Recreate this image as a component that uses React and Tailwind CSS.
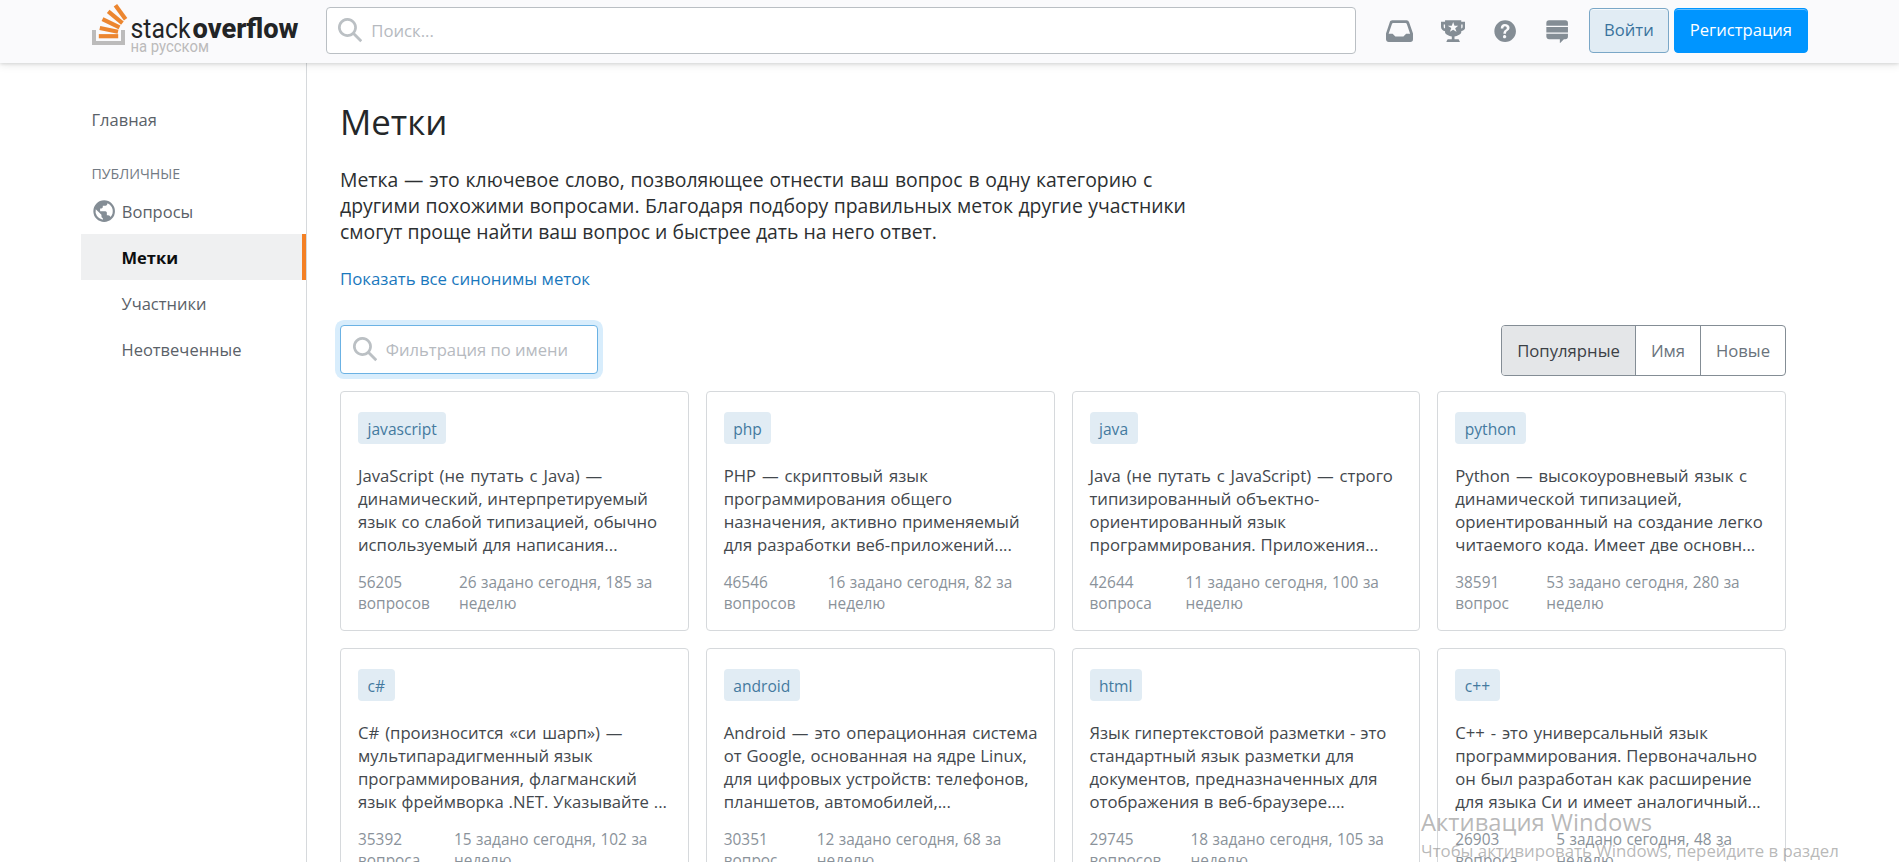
const tags = [
  { name: 'javascript', lines: ['JavaScript (не путать с Java) —', 'динамический, интерпретируемый', 'язык со слабой типизацией, обычно', 'используемый для написания...'], total: '56205', unit: 'вопросов', today: '26 задано сегодня, 185 за', col: 'w-[101px]' },
  { name: 'php', lines: ['PHP — скриптовый язык', 'программирования общего', 'назначения, активно применяемый', 'для разработки веб-приложений....'], total: '46546', unit: 'вопросов', today: '16 задано сегодня, 82 за', col: 'w-[104px]' },
  { name: 'java', lines: ['Java (не путать с JavaScript) — строго', 'типизированный объектно-', 'ориентированный язык', 'программирования. Приложения...'], total: '42644', unit: 'вопроса', today: '11 задано сегодня, 100 за', col: 'w-[96px]' },
  { name: 'python', lines: ['Python — высокоуровневый язык с', 'динамической типизацией,', 'ориентированный на создание легко', 'читаемого кода. Имеет две основн...'], total: '38591', unit: 'вопрос', today: '53 задано сегодня, 280 за', col: 'w-[91px]' },
  { name: 'c#', lines: ['C# (произносится «си шарп») —', 'мультипарадигменный язык', 'программирования, флагманский', 'язык фреймворка .NET. Указывайте ...'], total: '35392', unit: 'вопроса', today: '15 задано сегодня, 102 за', col: 'w-[96px]' },
  { name: 'android', lines: ['Android — это операционная система', 'от Google, основанная на ядре Linux,', 'для цифровых устройств: телефонов,', 'планшетов, автомобилей,...'], total: '30351', unit: 'вопрос', today: '12 задано сегодня, 68 за', col: 'w-[93px]' },
  { name: 'html', lines: ['Язык гипертекстовой разметки - это', 'стандартный язык разметки для', 'документов, предназначенных для', 'отображения в веб-браузере....'], total: '29745', unit: 'вопросов', today: '18 задано сегодня, 105 за', col: 'w-[101px]' },
  { name: 'c++', lines: ['C++ - это универсальный язык', 'программирования. Первоначально', 'он был разработан как расширение', 'для языка Си и имеет аналогичный...'], total: '26903', unit: 'вопроса', today: '5 задано сегодня, 48 за', col: 'w-[101px]' },
];

const paths = {
  inbox: 'M15.19 1H4.63c-.85 0-1.6.54-1.85 1.35L0 10.79V15c0 1.1.9 2 2 2h16a2 2 0 002-2v-4.21l-2.87-8.44A2 2 0 0015.19 1zm-.28 10l-2 2h-6l-2-2H1.96L4.4 3.68A1 1 0 015.35 3h9.12c.43 0 .82.28.95.68L17.86 11h-2.95z',
  trophy: 'M15 2V1H3v1H0v4c0 1.6 1.4 3 3 3v1c.4 1.5 3 2.6 5 3v2H5s-1 1.5-1 2h10c0-.4-1-2-1-2h-3v-2c2-.4 4.6-1.5 5-3V9c1.6-.2 3-1.4 3-3V2h-3zM3 7c-.5 0-1-.5-1-1V4h1v3zm8.4 2.5L9 8 6.6 9.4l1-2.7L5 5h3l1-2.7L10 5h2.8l-2.3 1.8 1 2.7h-.1zM16 6c0 .5-.5 1-1 1V4h1v2z',
  help: 'M9 1C4.64 1 1 4.64 1 9c0 4.36 3.64 8 8 8 4.36 0 8-3.64 8-8 0-4.36-3.64-8-8-8zm.81 12.13c-.02.71-.55 1.15-1.24 1.13-.66-.02-1.17-.49-1.15-1.2.02-.72.56-1.18 1.22-1.16.7.03 1.2.51 1.17 1.23zM11.77 8c-.59.66-1.78 1.09-2.05 1.97a4 4 0 00-.09.75c0 .05-.03.16-.18.16H7.88c-.16 0-.18-.1-.18-.15.06-1.35.66-2.2 1.83-2.88.39-.29.7-.75.7-1.24.01-1.24-1.64-1.82-2.35-.72-.21.33-.18.73-.18 1.1H5.75c0-1.97 1.03-3.26 3.03-3.26 1.75 0 3.47.87 3.47 2.83 0 .57-.2 1.05-.48 1.44z',
  sites: 'M15 1H3a2 2 0 00-2 2v2h16V3a2 2 0 00-2-2zM1 13c0 1.1.9 2 2 2h8v3l3-3h1a2 2 0 002-2v-2H1v2zm16-7H1v4h16V6z',
  globe: 'M9 1a8 8 0 100 16A8 8 0 009 1zM8 15.32a6.46 6.46 0 01-4.3-2.74 6.46 6.46 0 01-.93-5.01L7 11.68v.8c0 .88.12 1.52 1 1.52v1.32zm5.72-2c-.2-.66-1-1.32-1.72-1.32h-1v-2c0-.44-.56-1-1-1H6V7h1c.44 0 1-.56 1-1V5h2c.88 0 1.4-.72 1.4-1.6v-.33a6.45 6.45 0 013.83 4.51 6.45 6.45 0 01-1.51 5.73v.01z',
  search: 'M18 16.5l-5.14-5.18h-.35a7 7 0 10-1.19 1.19v.35L16.5 18l1.5-1.5zM12 7A5 5 0 112 7a5 5 0 0110 0z',
};

function Icon({ name, wide = false, className = '' }) {
  return (
    <svg
      viewBox={wide ? '0 0 20 18' : '0 0 18 18'}
      className={`${wide ? 'w-[27px]' : 'w-[24.3px]'} h-[24.3px] shrink-0 fill-current ${className}`}
      aria-hidden="true"
    >
      <path d={paths[name]} />
    </svg>
  );
}

function Logo() {
  return (
    <svg width="210" height="58" viewBox="0 0 210 58" className="block shrink-0" aria-label="Stack Overflow на русском">
      <path d="M2 30v13h29V30" fill="none" stroke="#bcbbbb" strokeWidth="4" />
      <g stroke="#ec8630" strokeWidth="4.2">
        <path d="M6.8 36.2h19.4" />
        <path d="M7.8 28l18.2 3.8" />
        <path d="M10.5 19.2l17 8.2" />
        <path d="M16.2 11.4l14.2 11.8" />
        <path d="M23.4 5.2l10.2 14" />
      </g>
      <text x="38.5" y="37.5" textLength="60" lengthAdjust="spacingAndGlyphs" fontFamily="Roboto" fontWeight="400" fontSize="27" fill="#222426">stack</text>
      <text x="100.5" y="37.5" textLength="106" lengthAdjust="spacingAndGlyphs" fontFamily="Roboto" fontWeight="800" fontSize="27" fill="#222426">overflow</text>
      <text x="38.5" y="52" textLength="78.5" lengthAdjust="spacingAndGlyphs" fontFamily="Roboto" fontWeight="400" fontSize="16" fill="#bcbbbb">на русском</text>
    </svg>
  );
}

function Header() {
  return (
    <header className="relative z-10 flex h-[63px] items-start bg-[#fafafc] pl-[92px] shadow-[0_1px_3px_rgba(12,13,14,0.12),0_3px_8px_rgba(12,13,14,0.08)]">
      <Logo />
      <div className="mt-[7px] ml-6 flex h-[47px] w-[1030px] items-center rounded-[4px] border border-[#babfc4] bg-white pl-[11px] text-[#bbc0c4]">
        <Icon name="search" />
        <span className="mt-px ml-[9px] text-[16.7px] text-[#b6babf]">Поиск...</span>
      </div>
      <div className="mt-[18.5px] ml-[30px] flex text-[#848d95]">
        <Icon name="inbox" wide />
        <Icon name="trophy" className="ml-7" />
        <Icon name="help" className="ml-[28px]" />
        <Icon name="sites" className="ml-[27px]" />
      </div>
      <div className="mt-2 ml-5 flex gap-[5px] text-[16.6px]">
        <button className="h-[45px] w-20 rounded-[4px] border border-[#7aa7c7] bg-[#e1ecf4] text-[#39739d] shadow-[inset_0_1px_0_rgba(255,255,255,0.7)]">Войти</button>
        <button className="h-[45px] w-[134px] rounded-[4px] border border-[#0095ff] bg-[#0095ff] text-white shadow-[inset_0_1px_0_rgba(255,255,255,0.4)]">Регистрация</button>
      </div>
    </header>
  );
}

function Sidebar() {
  return (
    <nav className="flex w-[226px] shrink-0 flex-col border-r border-[#d6d9dc] pt-[34px] text-[16.5px] text-[#5a6168]">
      <a className="flex h-[46px] items-center pl-[10.5px]">Главная</a>
      <div className="mt-[21px] flex h-[20px] items-center pl-[10.5px] text-[14.2px] text-[#727a83]">ПУБЛИЧНЫЕ</div>
      <a className="mt-1 flex h-[46px] items-center pl-[11px]">
        <Icon name="globe" className="text-[#848d95]" />
        <span className="mt-0.5 ml-[5.5px]">Вопросы</span>
      </a>
      <a className="flex h-[46px] items-center border-r-4 border-[#f48024] bg-[#eff0f1] pt-0.5 pl-[40.5px] font-bold text-[#0c0d0e]">Метки</a>
      <a className="flex h-[46px] items-center pt-0.5 pl-[40.5px]">Участники</a>
      <a className="flex h-[46px] items-center pt-0.5 pl-[40.5px]">Неотвеченные</a>
    </nav>
  );
}

function TagCard({ tag }) {
  return (
    <article className="h-[240px] rounded-[4px] border border-[#d6d9dc] px-[17px] pt-5">
      <div className="flex">
        <a className="flex h-8 items-center rounded-[4px] bg-[#e1ecf4] px-[9.5px] pt-[3px] text-[15.6px] text-[#447a9f]">{tag.name}</a>
      </div>
      <p className="mt-5 text-[16.7px] leading-[23px] whitespace-nowrap text-[#43484d]">
        {tag.lines.map((line) => (
          <span
            key={line}
            className={line.includes('—') || line.startsWith('C++') ? 'block [word-spacing:1.5px]' : 'block [word-spacing:0.5px]'}
          >
            {line}
          </span>
        ))}
      </p>
      <div className="mt-4 flex text-[15.4px] leading-[21px] whitespace-nowrap text-[#8a929a] [word-spacing:0.5px]">
        <div className={`${tag.col} shrink-0`}>
          <div>{tag.total}</div>
          <div>{tag.unit}</div>
        </div>
        <div>
          <div>{tag.today}</div>
          <div>неделю</div>
        </div>
      </div>
    </article>
  );
}

export default function App() {
  return (
    <div className="relative h-[862px] overflow-hidden bg-white font-['Open_Sans','Noto_Sans',sans-serif]">
      <Header />
      <div className="flex pl-[81px]">
        <Sidebar />
        <main className="w-[1479px] pt-[34px] pl-[33px]">
          <h1 className="text-[34.8px] leading-[50px] text-[#242729]">Метки</h1>
          <div className="mt-5 text-[19.4px] leading-[26.2px] whitespace-nowrap text-[#2c2f31]">
            <div className="[word-spacing:0.8px]">Метка — это ключевое слово, позволяющее отнести ваш вопрос в одну категорию с</div>
            <div className="[word-spacing:0.4px]">другими похожими вопросами. Благодаря подбору правильных меток другие участники</div>
            <div>смогут проще найти ваш вопрос и быстрее дать на него ответ.</div>
          </div>
          <a className="mt-[21.4px] block text-[16.8px] leading-6 text-[#1a78bd]">Показать все синонимы меток</a>
          <div className="mt-[34px] flex items-start justify-between">
            <div className="flex h-[49px] w-[258px] items-center rounded-[4px] border border-[#6bb2e4] bg-white pl-3 text-[#bbc0c4] shadow-[0_0_0_5px_#d8edfc]">
              <Icon name="search" />
              <span className="mt-0.5 ml-[8.5px] text-[16.6px] text-[#b6babf]">Фильтрация по имени</span>
            </div>
            <div className="flex h-[51px] rounded-[4px] border border-[#848d95] text-[16.7px] text-[#6a737c]">
              <button className="w-[134px] rounded-l-[3px] border-r border-[#848d95] bg-[#e4e6e8] text-[#3b4045]">Популярные</button>
              <button className="w-[65px] border-r border-[#848d95]">Имя</button>
              <button className="w-[84px]">Новые</button>
            </div>
          </div>
          <div className="mt-[15px] grid grid-cols-4 gap-[17px]">
            {tags.map((tag) => (
              <TagCard key={tag.name} tag={tag} />
            ))}
          </div>
        </main>
      </div>
      <div className="absolute top-[806px] left-[1421px] z-20 whitespace-nowrap text-[#9a9a9a]/70">
        <div className="text-[23.8px] leading-[32px]">Активация Windows</div>
        <div className="text-[16.8px] leading-[26px]">Чтобы активировать Windows, перейдите в раздел</div>
      </div>
    </div>
  );
}
